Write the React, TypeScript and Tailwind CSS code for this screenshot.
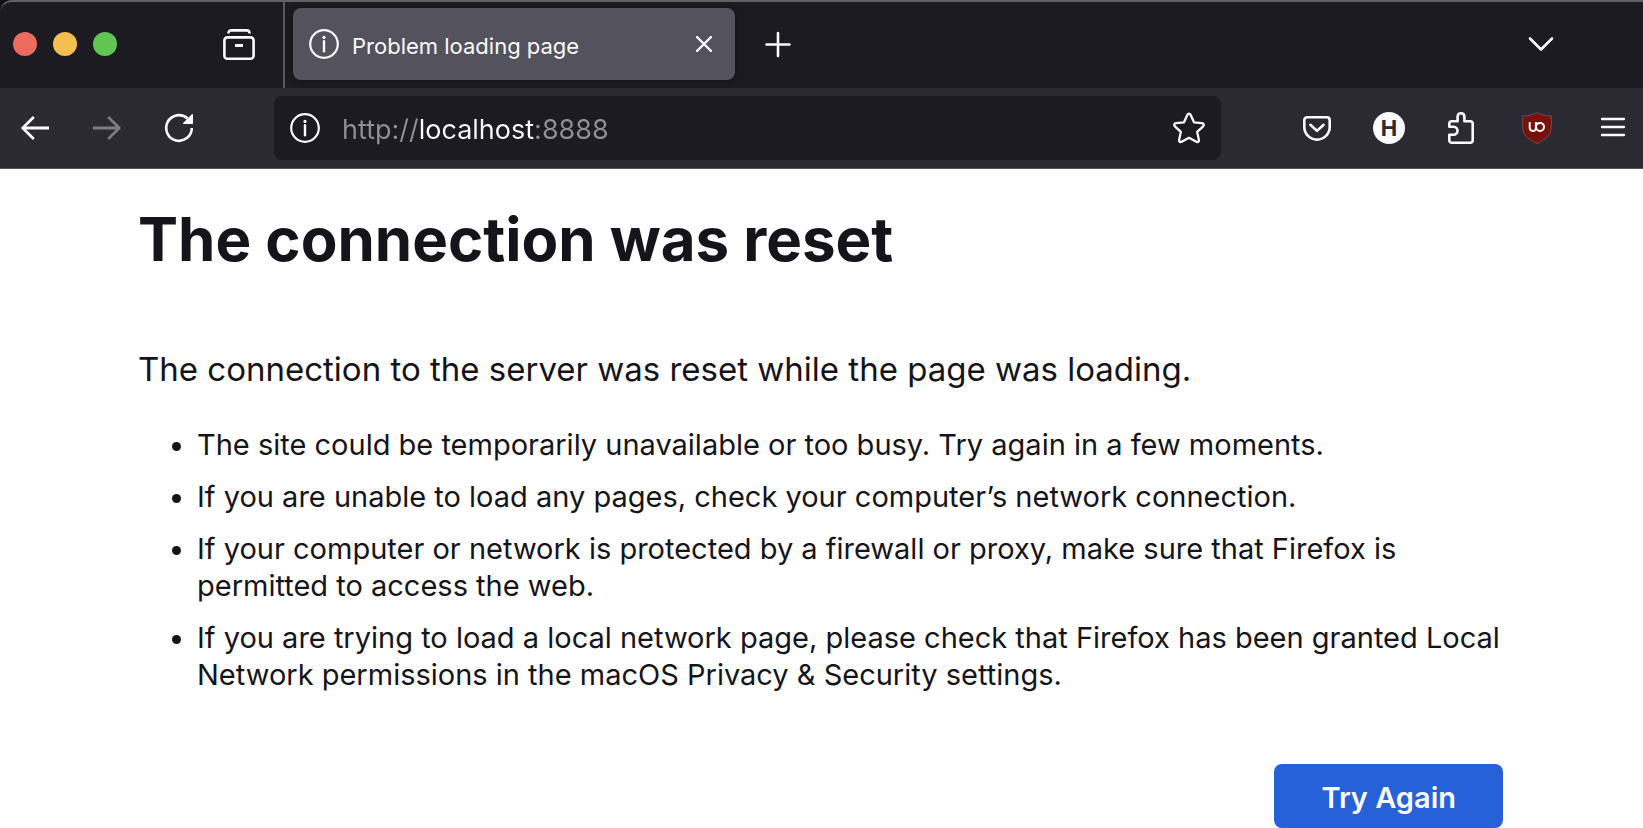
import type { ReactNode } from 'react';

const stroke = {
  fill: 'none',
  stroke: 'currentColor',
  strokeWidth: 2.6,
} as const;

function Icon({ children }: { children: ReactNode }) {
  return (
    <svg viewBox="0 0 32 32" className="size-8 shrink-0" aria-hidden="true">
      {children}
    </svg>
  );
}

function InfoIcon() {
  return (
    <Icon>
      <circle cx="16" cy="16" r="13.8" {...stroke} strokeWidth={2.2} />
      <circle cx="16" cy="9.4" r="1.6" fill="currentColor" />
      <path d="M16 13.2V23.2" {...stroke} strokeWidth={2.4} strokeLinecap="round" />
    </Icon>
  );
}

function IconButton({ label, disabled, children }: { label: string; disabled?: boolean; children: ReactNode }) {
  return (
    <button
      type="button"
      aria-label={label}
      disabled={disabled}
      className="flex h-16 w-10 shrink-0 items-center justify-center disabled:text-[#7d7c82]"
    >
      {children}
    </button>
  );
}

function TabStrip() {
  return (
    <div className="flex h-[88px] items-stretch rounded-tl-xl border-t-2 border-[#626166] bg-[#1c1b22]">
      <div className="flex w-[283px] shrink-0 items-center justify-between pr-6 pl-[13px]">
        <div className="flex gap-4 pb-0.5">
          <button type="button" aria-label="Close window" className="size-6 rounded-full bg-[#ed6a5e]" />
          <button type="button" aria-label="Minimize window" className="size-6 rounded-full bg-[#f5bf4f]" />
          <button type="button" aria-label="Zoom window" className="size-6 rounded-full bg-[#61c554]" />
        </div>
        <IconButton label="Recent browsing">
          <Icon>
            <path d="M5.4 4.4C5.4 2.3 6.6 1.4 8.4 1.4H23.6C25.4 1.4 26.6 2.3 26.6 4.4" {...stroke} />
            <rect x="1.4" y="8.4" width="29.2" height="21.4" rx="3" {...stroke} />
            <path d="M12 16.5H20" {...stroke} strokeWidth={3} />
          </Icon>
        </IconButton>
      </div>
      <div className="w-0.5 shrink-0 bg-[#59585e]" />
      <div className="flex items-center pb-0.5 pl-2">
        <div
          role="tab"
          aria-selected="true"
          className="flex h-18 w-[442px] items-center rounded-lg bg-[#54525d] px-[15px] shadow-[0_0_6px_rgba(0,0,0,0.5)]"
        >
          <InfoIcon />
          <span className="ml-3 flex-1 truncate pt-1 text-[22px] leading-8">Problem loading page</span>
          <button type="button" aria-label="Close tab" className="flex size-8 items-center justify-center">
            <svg viewBox="0 0 16 16" className="size-4" aria-hidden="true">
              <path d="M1 1L15 15M15 1L1 15" {...stroke} strokeWidth={2.4} strokeLinecap="round" />
            </svg>
          </button>
        </div>
        <button type="button" aria-label="New tab" className="ml-[27px] flex size-8 items-center justify-center">
          <Icon>
            <path d="M16 5V28M4.500 16.500H27.500" {...stroke} strokeLinecap="round" />
          </Icon>
        </button>
      </div>
      <div className="ml-auto flex items-center pr-[82px]">
        <IconButton label="List all tabs">
          <Icon>
            <path d="M5 9.500L16 20.500L27 9.500" {...stroke} strokeLinecap="round" strokeLinejoin="round" />
          </Icon>
        </IconButton>
      </div>
    </div>
  );
}

function AddressBar() {
  return (
    <form className="mr-[76px] ml-[75px] flex h-16 min-w-0 flex-1 items-center rounded-lg bg-[#1c1b22] pr-4 pl-[15px]">
      <button type="button" aria-label="Site information">
        <InfoIcon />
      </button>
      <input
        type="text"
        aria-label="Address"
        defaultValue="http://localhost:8888"
        className="ml-[21px] min-w-0 flex-1 bg-[linear-gradient(90deg,#8f8e94_77px,#fbfbfe_77px,#fbfbfe_192px,#8f8e94_192px)] bg-clip-text pt-1 text-[27px] leading-10 text-transparent caret-white outline-none"
      />
      <button type="button" aria-label="Bookmark this page">
        <Icon>
          <path
            d="M14.400 2.800C15.100 1.300 16.900 1.300 17.600 2.800L21 10.300L29.100 11.200C30.700 11.400 31.300 13.200 30.100 14.300L24.200 19.900L25.900 27.900C26.200 29.500 24.700 30.600 23.300 29.800L16 25.800L8.700 29.800C7.300 30.600 5.800 29.500 6.100 27.900L7.800 19.900L1.900 14.300C0.700 13.200 1.300 11.400 2.900 11.200L11 10.300Z"
            {...stroke}
            strokeWidth={2.3}
            strokeLinejoin="round"
          />
        </Icon>
      </button>
    </form>
  );
}

function Toolbar() {
  return (
    <div className="flex items-center border-b border-[#55535f] bg-[#2b2a33] py-2 pr-2.5 pl-[15px]">
      <div className="flex gap-8">
        <IconButton label="Go back">
          <Icon>
            <path d="M30 16H3.500M14.800 5L3.700 16L14.800 27" {...stroke} strokeWidth={2.8} strokeLinejoin="round" />
          </Icon>
        </IconButton>
        <IconButton label="Go forward" disabled>
          <Icon>
            <path d="M2 16H28.500M17.200 5L28.300 16L17.200 27" {...stroke} strokeWidth={2.8} strokeLinejoin="round" />
          </Icon>
        </IconButton>
        <IconButton label="Reload page">
          <Icon>
            <path d="M28.800 16A12.800 12.800 0 1 1 24.600 6.500" {...stroke} />
            <path d="M30 2.600V11.200Q30 12 29.200 12H20.600Q19.400 11.900 20.200 11L28.800 2.300Q29.700 1.600 30 2.600Z" fill="currentColor" />
          </Icon>
        </IconButton>
      </div>
      <AddressBar />
      <div className="flex gap-8">
        <IconButton label="Save to Pocket">
          <Icon>
            <path d="M6.300 5.300H25.700Q28.700 5.300 28.700 8.300V14.900A12.700 12.700 0 0 1 3.300 14.900V8.300Q3.300 5.300 6.300 5.300Z" {...stroke} />
            <path d="M9.400 12.800L16 18.900L22.600 12.800" {...stroke} strokeLinecap="round" strokeLinejoin="round" />
          </Icon>
        </IconButton>
        <IconButton label="H extension">
          <span className="flex size-8 items-center justify-center rounded-full bg-[#fbfbfe] text-[22px] leading-8 font-bold text-[#2b2a33]">
            H
          </span>
        </IconButton>
        <IconButton label="Extensions">
          <Icon>
            <path
              d="M4.300 14.700V11.700Q4.300 9.200 6.800 9.200H12.600V5Q12.600 1.300 16 1.300T19.400 5V9.200H25.200Q27.700 9.200 27.700 11.700V28.200Q27.700 30.700 25.200 30.700H6.800Q4.300 30.700 4.300 28.200V22.700H8.500A4 4 0 0 0 8.500 14.700Z"
              {...stroke}
              strokeLinejoin="round"
            />
          </Icon>
        </IconButton>
      </div>
      <div className="ml-9 flex gap-9">
        <IconButton label="uBlock Origin">
          <Icon>
            <path
              d="M16 0.500C12.500 2.800 7 3.800 1.700 4V15.500C1.700 23.500 8 27.800 16 31.500C24 27.800 30.300 23.500 30.300 15.500V4C25 3.800 19.500 2.800 16 0.500Z"
              fill="#78110c"
              stroke="#75555b"
              strokeWidth="0.8"
            />
            <path d="M8.700 10V15.500Q8.700 18.900 11.800 18.900T14.900 15.500V10" {...stroke} strokeWidth={2} />
            <circle cx="19" cy="14.900" r="4" {...stroke} strokeWidth={2} />
          </Icon>
        </IconButton>
        <IconButton label="Open application menu">
          <Icon>
            <path d="M5 7H27M5 15H27M5 23H27" {...stroke} strokeWidth={2.3} strokeLinecap="round" />
          </Icon>
        </IconButton>
      </div>
    </div>
  );
}

const suggestions = [
  'The site could be temporarily unavailable or too busy. Try again in a few moments.',
  'If you are unable to load any pages, check your computer’s network connection.',
  'If your computer or network is protected by a firewall or proxy, make sure that Firefox is permitted to access the web.',
  'If you are trying to load a local network page, please check that Firefox has been granted Local Network permissions in the macOS Privacy & Security settings.',
];

export default function App() {
  return (
    <div className="min-h-screen bg-white font-['Inter','Liberation_Sans',sans-serif] text-[#15141a]">
      <header className="bg-[#101014] text-[#fbfbfe]">
        <TabStrip />
        <Toolbar />
      </header>
      <main className="flex flex-col pt-[30px] pr-[140px] pl-[138px]">
        <h1 className="text-[60px] leading-20 font-bold">The connection was reset</h1>
        <p className="mt-[66px] text-[33px] leading-12">The connection to the server was reset while the page was loading.</p>
        <ul className="mt-[33px] flex list-disc flex-col gap-[15px] pl-[59px] text-[29px] leading-[37px]">
          {suggestions.map((text) => (
            <li key={text}>{text}</li>
          ))}
        </ul>
        <button
          type="button"
          className="mt-[71px] h-16 self-end rounded-lg bg-[#2761da] px-[47px] pt-1 text-[29px] leading-10 font-semibold text-[#fbfbfe]"
        >
          Try Again
        </button>
      </main>
    </div>
  );
}
